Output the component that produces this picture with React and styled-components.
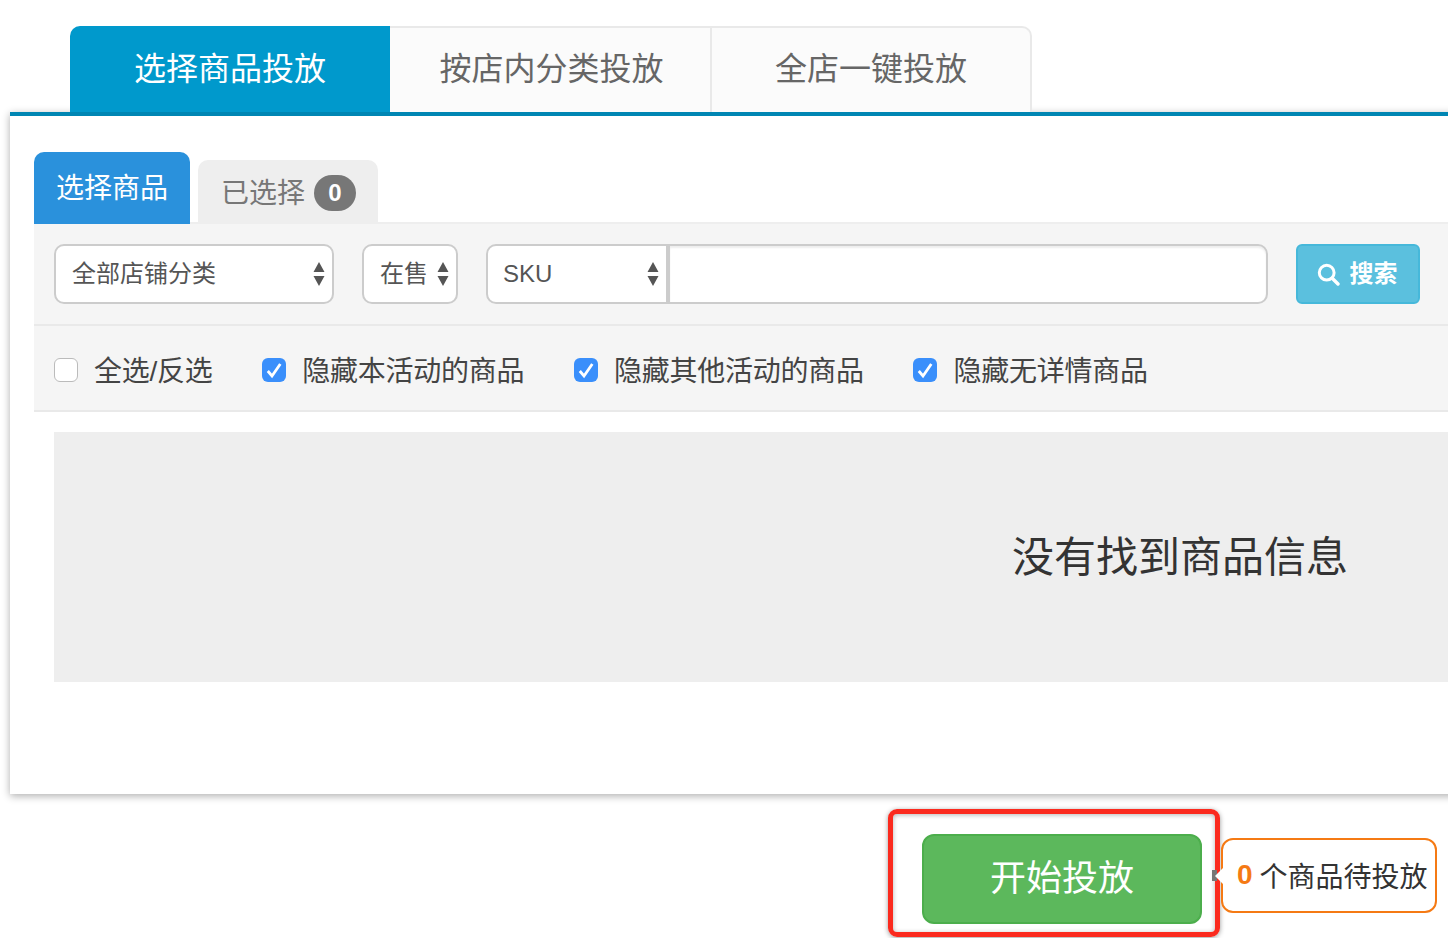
import React from "react";
import styled, { createGlobalStyle } from "styled-components";

const Global = createGlobalStyle`
  html, body { margin: 0; padding: 0; background: #fff; overflow: hidden; }
  body { font-family: "Liberation Sans", "Noto Sans CJK SC", sans-serif; color: #333; }
  #root { width: 1448px; height: 938px; overflow: hidden; position: relative; }
`;

const Page = styled.div`
  width: 2400px;
  height: 938px;
  padding-top: 26px;
  box-sizing: border-box;
`;
const MainTabs = styled.div`
  display: flex;
  margin-left: 70px;
  height: 86px;
`;
const MainTab = styled.div`
  width: ${p => p.$w}px;
  box-sizing: border-box;
  display: flex;
  align-items: center;
  justify-content: center;
  font-size: 32px;
  padding: 0 0 ${p => (p.$active ? 7 : 9)}px ${p => p.$pl || 0}px;
  color: ${p => (p.$active ? "#fff" : "#666")};
  background: ${p => (p.$active ? "#0099cc" : "#fbfbfb")};
  border: ${p => (p.$active ? "none" : "2px solid #e9e9e9")};
  border-bottom: none;
  border-left: none;
  border-radius: ${p => p.$radius};
`;
const Panel = styled.div`
  margin-left: 10px;
  background: #fff;
  border-top: 4px solid #0086b3;
  padding: 36px 0 112px 24px;
  box-shadow: 0 2px 8px rgba(0, 0, 0, 0.32);
`;
const SubTabs = styled.div`
  display: flex;
  align-items: flex-start;
  gap: 8px;
  height: 70px;
`;
const SubTabActive = styled.div`
  width: 156px;
  height: 72px;
  box-sizing: border-box;
  padding-top: 18px;
  text-align: center;
  font-size: 28px;
  line-height: 38px;
  background: #2a91dc;
  color: #fff;
  border-radius: 10px 10px 0 0;
  position: relative;
  z-index: 1;
`;
const SubTab = styled.div`
  margin-top: 8px;
  width: 180px;
  height: 62px;
  box-sizing: border-box;
  padding-left: 23px;
  display: flex;
  align-items: center;
  gap: 9px;
  font-size: 28px;
  background: #eee;
  color: #777;
  border-radius: 10px 10px 0 0;
`;
const Count = styled.span`
  width: 42px;
  height: 36px;
  margin-top: 4px;
  border-radius: 18px;
  background: #777;
  color: #fff;
  font-size: 24px;
  font-weight: 700;
  display: flex;
  align-items: center;
  justify-content: center;
`;
const FilterBar = styled.div`
  display: flex;
  align-items: flex-start;
  height: 104px;
  box-sizing: border-box;
  padding: 20px 0 0 20px;
  background: #f5f5f5;
  border-top: 2px solid #eeeeee;
  border-bottom: 2px solid #e9e9e9;
`;
const Select = styled.div`
  width: ${p => p.$w}px;
  height: 60px;
  margin-left: ${p => p.$ml || 0}px;
  box-sizing: border-box;
  padding: 0 7px 0 16px;
  display: flex;
  align-items: center;
  justify-content: space-between;
  background: #fff;
  border: 2px solid #ccc;
  border-radius: ${p => p.$radius || "10px"};
  font-size: 24px;
  color: #555;
`;
const CjkText = styled.span`
  margin-bottom: 5px;
`;
const LatinText = styled.span`
  margin-left: -1px;
`;
const Input = styled.div`
  width: 600px;
  height: 60px;
  box-sizing: border-box;
  background: #fff;
  border: 2px solid #ccc;
  border-radius: 0 10px 10px 0;
  box-shadow: inset 0 2px 2px rgba(0, 0, 0, 0.07);
`;
const SearchBtn = styled.div`
  width: 124px;
  height: 60px;
  margin-left: 28px;
  box-sizing: border-box;
  display: flex;
  align-items: center;
  justify-content: center;
  gap: 10px;
  padding-right: 2px;
  background: #5bc0de;
  border: 2px solid #46b8da;
  border-radius: 6px;
  color: #fff;
  font-size: 24px;
  font-weight: 700;
`;
const CheckRow = styled.div`
  display: flex;
  align-items: center;
  gap: 49.7px;
  height: 86px;
  box-sizing: border-box;
  padding: 4px 0 0 20px;
  background: #f5f5f5;
  border-bottom: 2px solid #e9e9e9;
`;
const CheckItem = styled.label`
  display: flex;
  align-items: center;
  gap: 16px;
  font-size: 28px;
  letter-spacing: -0.25px;
  color: #444;
`;
const CheckText = styled.span`
  margin-bottom: 2px;
`;
const Box = styled.span`
  width: 24px;
  height: 24px;
  box-sizing: border-box;
  border-radius: 6px;
  display: flex;
  align-items: center;
  justify-content: center;
  background: ${p => (p.$on ? "#3a8ffb" : "#fff")};
  border: ${p => (p.$on ? "none" : "1.5px solid #bbb")};
`;
const Empty = styled.div`
  margin: 20px 0 0 20px;
  width: 2252px;
  height: 250px;
  display: flex;
  align-items: center;
  justify-content: center;
  background: #eee;
  font-size: 42px;
  color: #333;
  padding-bottom: 8px;
  box-sizing: border-box;
`;
const Footer = styled.div`
  display: flex;
  align-items: flex-start;
  margin: 40px 0 0 922px;
`;
const StartBtn = styled.div`
  width: 280px;
  height: 90px;
  box-sizing: border-box;
  display: flex;
  align-items: center;
  justify-content: center;
  padding-bottom: 8px;
  background: #5cb85c;
  border: 2px solid #4cae4c;
  border-radius: 12px;
  color: #fff;
  font-size: 36px;
`;
const Pending = styled.div`
  position: relative;
  z-index: 1;
  margin: 4px 0 0 19px;
  width: 216px;
  height: 75px;
  box-sizing: border-box;
  display: flex;
  align-items: center;
  gap: 7px;
  padding: 0 0 2px 14px;
  background: #fff;
  border: 2px solid #f57a14;
  border-radius: 12px;
  font-size: 28px;
  color: #333;
  &::before {
    content: "";
    position: absolute;
    left: -11px;
    top: 30px;
    width: 5px;
    height: 11px;
    background: #777;
  }
  &::after {
    content: "";
    position: absolute;
    left: -8px;
    top: 28px;
    border-style: solid;
    border-width: 8px 8px 8px 0;
    border-color: transparent #fff transparent transparent;
  }
`;
const Zero = styled.span`
  color: #f57a14;
  font-weight: 700;
`;
const Annotation = styled.div`
  position: absolute;
  left: 888px;
  top: 809px;
  width: 332px;
  height: 128px;
  box-sizing: border-box;
  border: 5px solid #fb2a1e;
  border-radius: 9px;
  box-shadow: 0 1px 5px rgba(0, 0, 0, 0.4), inset 0 1px 5px rgba(0, 0, 0, 0.3);
  pointer-events: none;
`;

const Arrows = () => (
  <svg width="12" height="24" viewBox="0 0 12 24">
    <path d="M6 0 L11.5 10 H0.5 Z M0.5 14 H11.5 L6 24 Z" fill="#555" />
  </svg>
);
const Search = () => (
  <svg width="23" height="23" viewBox="0 0 23 23" fill="none" stroke="#fff">
    <circle cx="9.7" cy="9.7" r="7.4" strokeWidth="3" />
    <path d="M15.2 15.2 L21 21" strokeWidth="3.4" strokeLinecap="round" />
  </svg>
);
const Tick = ({ on }) => (
  <Box $on={on}>
    {on && (
      <svg width="24" height="24" viewBox="0 0 24 24" fill="none">
        <path d="M5.8 13 L10 18 L18.3 6" stroke="#fff" strokeWidth="2.8" />
      </svg>
    )}
  </Box>
);

export default function App() {
  return (
    <Page>
      <Global />
      <MainTabs>
        <MainTab $active $w={320} $radius="10px 0 0 0">选择商品投放</MainTab>
        <MainTab $w={322} $pl={3} $radius="0">按店内分类投放</MainTab>
        <MainTab $w={320} $radius="0 10px 0 0">全店一键投放</MainTab>
      </MainTabs>
      <Panel>
        <SubTabs>
          <SubTabActive>选择商品</SubTabActive>
          <SubTab>已选择<Count>0</Count></SubTab>
        </SubTabs>
        <FilterBar>
          <Select $w={280}><CjkText>全部店铺分类</CjkText><Arrows /></Select>
          <Select $w={96} $ml={28}><CjkText>在售</CjkText><Arrows /></Select>
          <Select $w={182} $ml={28} $radius="10px 0 0 10px"><LatinText>SKU</LatinText><Arrows /></Select>
          <Input />
          <SearchBtn><Search /><CjkText>搜索</CjkText></SearchBtn>
        </FilterBar>
        <CheckRow>
          <CheckItem><Tick /><CheckText>全选/反选</CheckText></CheckItem>
          <CheckItem><Tick on /><CheckText>隐藏本活动的商品</CheckText></CheckItem>
          <CheckItem><Tick on /><CheckText>隐藏其他活动的商品</CheckText></CheckItem>
          <CheckItem><Tick on /><CheckText>隐藏无详情商品</CheckText></CheckItem>
        </CheckRow>
        <Empty>没有找到商品信息</Empty>
      </Panel>
      <Footer>
        <StartBtn>开始投放</StartBtn>
        <Pending><Zero>0</Zero>个商品待投放</Pending>
      </Footer>
      <Annotation />
    </Page>
  );
}
